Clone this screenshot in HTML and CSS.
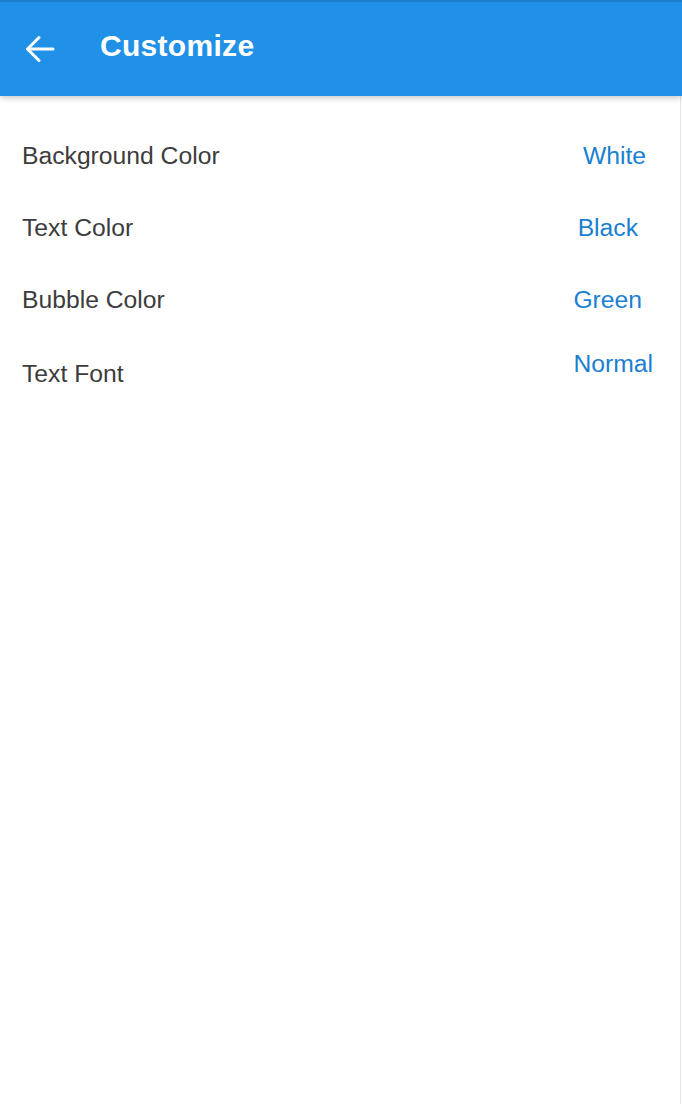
FILE: index.html
```html
<!DOCTYPE html>
<html lang="en">
<head>
<meta charset="utf-8">
<title>Customize</title>
<link rel="stylesheet" href="styles.css">
</head>
<body>
<div class="page">
  <header class="toolbar">
    <button class="back" aria-label="Back">
      <svg width="30" height="28" viewBox="0 0 30 28" fill="none" stroke="#fff" stroke-width="3" stroke-linecap="round" stroke-linejoin="round">
        <path d="M28 14H3"/>
        <path d="M14 2.5L2.5 14L14 25.5"/>
      </svg>
    </button>
    <h1 class="title">Customize</h1>
  </header>
  <main class="content">
    <ul class="settings">
      <li class="row">
        <span class="label">Background Color</span>
        <span class="value value-white">White</span>
      </li>
      <li class="row">
        <span class="label">Text Color</span>
        <span class="value value-black">Black</span>
      </li>
      <li class="row">
        <span class="label">Bubble Color</span>
        <span class="value value-green">Green</span>
      </li>
      <li class="row">
        <span class="label label-font">Text Font</span>
        <span class="value value-normal">Normal</span>
      </li>
    </ul>
  </main>
</div>
</body>
</html>
```
FILE: styles.css
```css
* { box-sizing: border-box; }
html, body {
  margin: 0;
  padding: 0;
  background: #fff;
}
body {
  font-family: "Liberation Sans", Arial, sans-serif;
  width: 682px;
  min-height: 1104px;
}
.page {
  display: flex;
  flex-direction: column;
  min-height: 1104px;
}
.toolbar {
  position: relative;
  z-index: 2;
  height: 96px;
  background: #2191e8;
  border-top: 2px solid #1c7dcb;
  display: flex;
  align-items: center;
  padding-left: 25px;
  box-shadow: 0 2px 6px rgba(0, 0, 0, 0.22);
}
.back {
  background: none;
  border: 0;
  padding: 0;
  margin: 0;
  width: 30px;
  height: 28px;
  display: flex;
  align-items: center;
  justify-content: center;
  cursor: pointer;
}
.back svg { display: block; }
.title {
  margin: 0 0 6px 45px;
  color: #fff;
  font-family: "Liberation Sans", Arial, sans-serif;
  font-weight: 700;
  font-size: 30px;
  letter-spacing: 0.3px;
}
.content {
  flex: 1;
  width: 681px;
  border-right: 1px solid #e4e4e4;
  padding-top: 24px;
}
.settings {
  list-style: none;
  margin: 0;
  padding: 0;
}
.row {
  height: 72px;
  display: flex;
  align-items: center;
  justify-content: space-between;
  padding-left: 22px;
  font-size: 24.7px;
}
.label {
  color: #3c3c3c;
}
.label-font {
  margin-top: 4px;
}
.value {
  color: #1a7fd1;
}
.value-white { margin-right: 34px; }
.value-black { margin-right: 42px; }
.value-green { margin-right: 38px; }
.value-normal { margin-right: 27px; margin-bottom: 16px; }
```
